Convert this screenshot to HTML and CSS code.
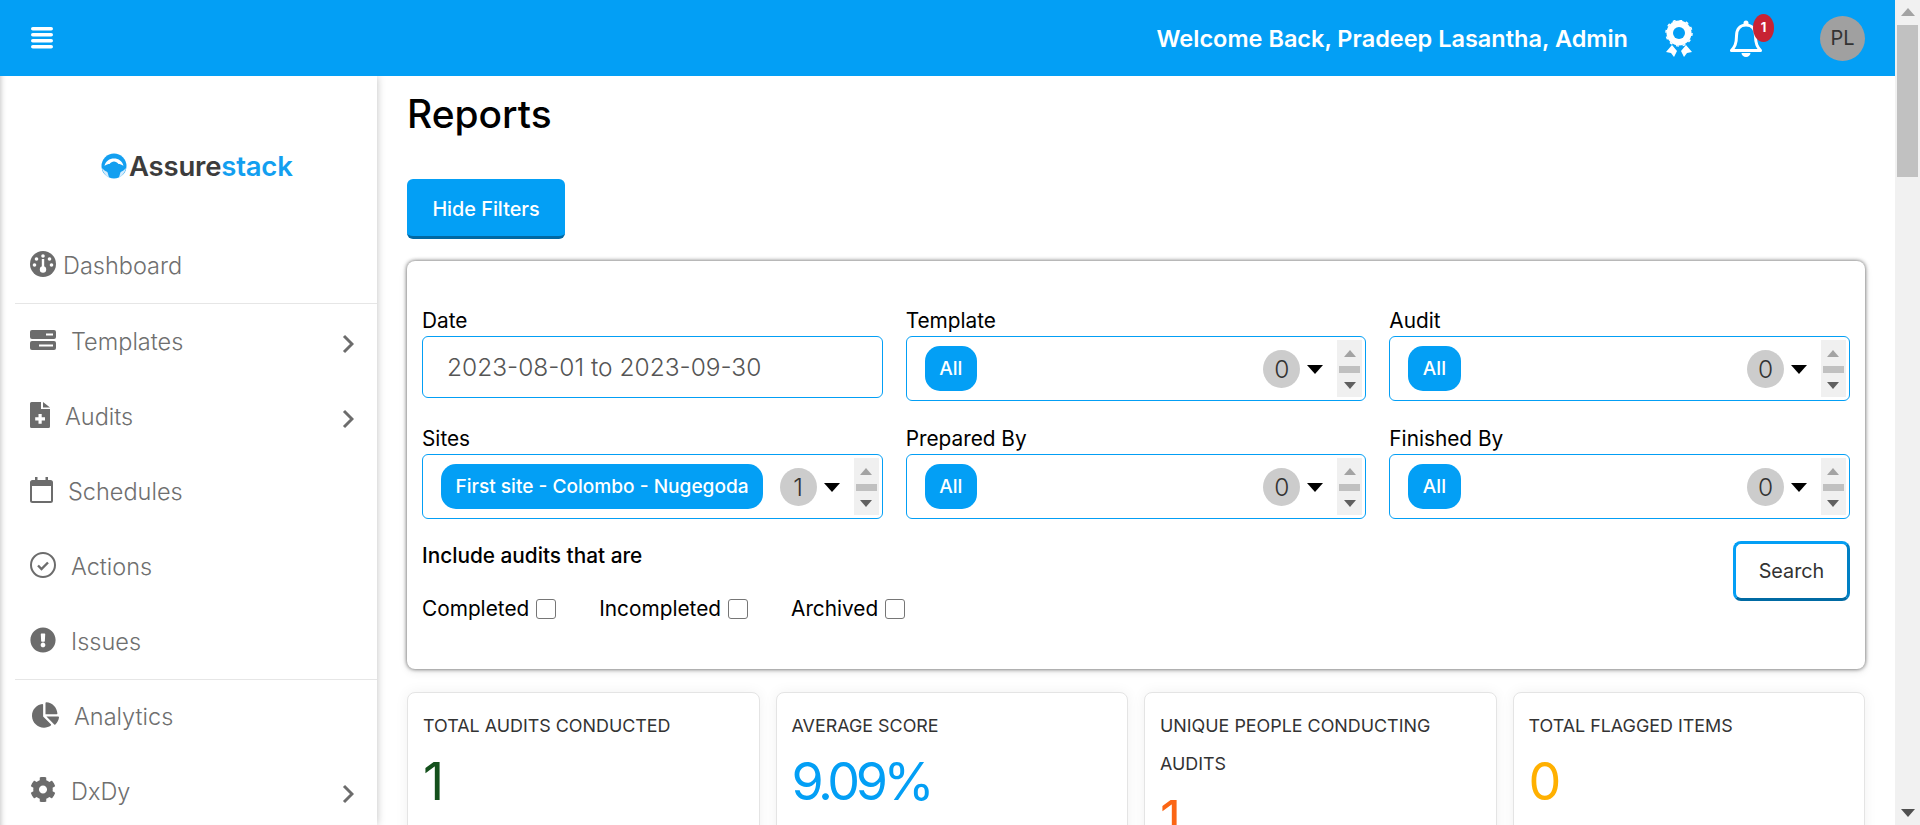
FILE: index.html
```html
<!DOCTYPE html>
<html lang="en">
<head>
    <meta charset="UTF-8">
    <meta name="viewport" content="width=device-width, initial-scale=1.0">
    <title>Reports</title>
    <link rel="stylesheet" href="styles.css">
</head>
<body>
    <div class="page">
        <header class="topbar">
            <svg class="menu-icon" width="22" height="22" viewBox="0 0 22 22"><rect y="0" width="22" height="3.6" rx="1.8"/><rect y="6" width="22" height="3.6" rx="1.8"/><rect y="12" width="22" height="3.6" rx="1.8"/><rect y="18" width="22" height="3.6" rx="1.8"/></svg>
            <div class="welcome">Welcome Back, Pradeep Lasantha, Admin</div>
            <svg class="award-icon" width="28" height="37" viewBox="0 0 28 37">
                <path d="M1 32 L7 25 L12 31 L9 37 L6 33 Z M27 32 L21 25 L16 31 L19 37 L22 33 Z" fill="#fff"/>
                <circle cx="14" cy="13" r="12.500" fill="#fff"/>
                <circle cx="14" cy="13" r="13" fill="none" stroke="#fff" stroke-width="1.500" stroke-dasharray="3 3.800"/>
                <circle cx="14" cy="13" r="6" fill="#039ff5"/>
            </svg>
            <div class="bell">
                <svg width="32" height="37" viewBox="0 0 32 37">
                    <path d="M16 5c-6 0-9.500 4.500-9.500 11 0 8-2 11-5 14.500h29c-3-3.500-5-6.500-5-14.500C25.500 9.500 22 5 16 5z" fill="none" stroke="#fff" stroke-width="3" stroke-linejoin="round"/>
                    <circle cx="16" cy="3" r="2.500" fill="#fff"/>
                    <path d="M11.500 33h9a4.500 4 0 0 1-9 0z" fill="#fff"/>
                </svg>
                <span class="badge">1</span>
            </div>
            <div class="avatar">PL</div>
        </header>

        <div class="body-row">
            <aside class="sidebar">
                <div class="logo">
                    <svg width="26" height="26" viewBox="0 0 26 26">
                        <circle cx="13" cy="13" r="12.500" fill="#139ff0"/>
                        <path d="M3.500 13c1-5 5-7.500 9.500-7.500s8.500 2.500 9.500 7.500c-2-1.500-3.500-2-5-2-1-1.500-3-2.500-4.500-2.500s-3.500 1-4.500 2.500c-1.500 0-3 .5-5 2z" fill="#fff"/>
                        <path d="M0.800 15c1 4 4 8 7.500 10-1-2-1-4-2-6-2-1-3.500-2-5.500-4z M25.200 15c-1 4-4 8-7.500 10 1-2 1-4 2-6 2-1 3.500-2 5.500-4z" fill="#d5ecfc"/>
                    </svg>
                    <span class="logo-text">Assure<span class="logo-accent">stack</span></span>
                </div>
                <nav class="nav">
                    <a class="nav-item nav-first">
                        <svg class="nav-icon" width="26" height="26" viewBox="0 0 26 26"><circle cx="13" cy="13" r="13"/><g fill="#fff"><circle cx="13" cy="5" r="1.800"/><circle cx="6.500" cy="8" r="1.800"/><circle cx="19.500" cy="8" r="1.800"/><circle cx="4.500" cy="14" r="1.800"/><circle cx="21.500" cy="14" r="1.800"/><rect x="11.800" y="8" width="2.400" height="9"/><circle cx="13" cy="18.500" r="3.200"/></g></svg>
                        <span>Dashboard</span>
                    </a>
                    <a class="nav-item">
                        <svg class="nav-icon" width="26" height="20" viewBox="0 0 26 20"><rect width="26" height="9" rx="2"/><rect y="11" width="26" height="9" rx="2"/><rect x="16" y="3.500" width="7" height="2" fill="#fff"/><rect x="9" y="14.500" width="14" height="2" fill="#fff"/></svg>
                        <span>Templates</span>
                        <svg class="chevron" width="12" height="20" viewBox="0 0 12 20"><path d="M2 2l8 8-8 8" fill="none" stroke="#6c6c6c" stroke-width="3"/></svg>
                    </a>
                    <a class="nav-item">
                        <svg class="nav-icon" width="20" height="26" viewBox="0 0 20 26"><path d="M1.500 0H11v7h9v17.500a1.500 1.500 0 0 1-1.500 1.500h-17A1.500 1.500 0 0 1 0 24.500v-23A1.500 1.500 0 0 1 1.500 0zM13 0l7 5.500h-7z"/><path d="M8.500 12h3.200v3.300H15v3.200h-3.300v3.300H8.500v-3.300H5.200v-3.200h3.300z" fill="#fff"/></svg>
                        <span>Audits</span>
                        <svg class="chevron" width="12" height="20" viewBox="0 0 12 20"><path d="M2 2l8 8-8 8" fill="none" stroke="#6c6c6c" stroke-width="3"/></svg>
                    </a>
                    <a class="nav-item">
                        <svg class="nav-icon" width="23" height="26" viewBox="0 0 23 26"><rect x="1" y="4" width="21" height="21" rx="1.500" fill="none" stroke="#6c6c6c" stroke-width="2"/><rect x="1" y="4" width="21" height="5"/><rect x="5" y="0" width="2.500" height="5"/><rect x="15.500" y="0" width="2.500" height="5"/></svg>
                        <span>Schedules</span>
                    </a>
                    <a class="nav-item">
                        <svg class="nav-icon" width="26" height="26" viewBox="0 0 26 26"><circle cx="13" cy="13" r="12" fill="none" stroke="#6c6c6c" stroke-width="2"/><path d="M8 13.500l3.500 3.500 6.500-6.500" fill="none" stroke="#6c6c6c" stroke-width="2.400"/></svg>
                        <span>Actions</span>
                    </a>
                    <a class="nav-item">
                        <svg class="nav-icon" width="26" height="26" viewBox="0 0 512 512"><path d="M504 256c0 136.997-111.043 248-248 248S8 392.997 8 256C8 119.083 119.043 8 256 8s248 111.083 248 248zm-248 50c-25.405 0-46 20.595-46 46s20.595 46 46 46 46-20.595 46-46-20.595-46-46-46zm-43.673-165.346l7.418 136c.347 6.364 5.609 11.346 11.982 11.346h48.546c6.373 0 11.635-4.982 11.982-11.346l7.418-136c.375-6.874-5.098-12.654-11.982-12.654h-63.383c-6.884 0-12.356 5.78-11.981 12.654z"/></svg>
                        <span>Issues</span>
                    </a>
                    <a class="nav-item nav-ruled">
                        <svg class="nav-icon" width="27" height="26" viewBox="0 0 544 512"><path d="M527.79 288H290.5l158.03 158.03c6.04 6.04 15.98 6.53 22.19.68 38.7-36.46 65.32-85.61 73.13-140.86 1.34-9.46-6.51-17.85-16.06-17.85zm-15.83-64.8C503.72 103.74 408.26 8.28 288.8.04 279.68-.59 272 7.1 272 16.24V240h223.77c9.14 0 16.82-7.68 16.19-16.8zM224 288V50.71c0-9.55-8.39-17.4-17.84-16.06C86.99 51.49-4.1 155.6.14 280.37 4.5 408.51 114.83 513.59 243.03 511.98c50.4-.63 96.97-16.87 135.26-44.03 7.9-5.6 8.42-17.23 1.57-24.08L224 288z"/></svg>
                        <span>Analytics</span>
                    </a>
                    <a class="nav-item">
                        <svg class="nav-icon" width="26" height="27" viewBox="0 0 512 512"><path d="M487.4 315.7l-42.6-24.6c4.3-23.2 4.3-47 0-70.2l42.6-24.6c4.9-2.8 7.1-8.6 5.5-14-11.1-35.6-30-67.8-54.7-94.6-3.8-4.1-10-5.1-14.8-2.3L380.8 110c-17.9-15.4-38.5-27.3-60.8-35.1V25.8c0-5.6-3.9-10.5-9.4-11.7-36.7-8.2-74.3-7.8-109.2 0-5.5 1.2-9.4 6.1-9.4 11.7V75c-22.2 7.9-42.8 19.8-60.8 35.1L88.7 85.5c-4.9-2.8-11-1.9-14.8 2.3-24.7 26.7-43.6 58.9-54.7 94.6-1.7 5.4.6 11.2 5.5 14L67.3 221c-4.3 23.2-4.3 47 0 70.2l-42.6 24.6c-4.9 2.8-7.1 8.6-5.5 14 11.1 35.6 30 67.8 54.7 94.6 3.8 4.1 10 5.1 14.8 2.3l42.6-24.6c17.9 15.4 38.5 27.3 60.8 35.1v49.2c0 5.6 3.9 10.5 9.4 11.7 36.7 8.2 74.3 7.8 109.2 0 5.5-1.2 9.4-6.1 9.4-11.7v-49.2c22.2-7.9 42.8-19.8 60.8-35.1l42.6 24.6c4.9 2.8 11 1.9 14.8-2.3 24.7-26.7 43.6-58.9 54.7-94.6 1.5-5.5-.7-11.3-5.6-14.1zM256 336c-44.1 0-80-35.9-80-80s35.9-80 80-80 80 35.9 80 80-35.9 80-80 80z"/></svg>
                        <span>DxDy</span>
                        <svg class="chevron" width="12" height="20" viewBox="0 0 12 20"><path d="M2 2l8 8-8 8" fill="none" stroke="#6c6c6c" stroke-width="3"/></svg>
                    </a>
                </nav>
            </aside>

            <main class="content">
                <h1 class="title">Reports</h1>
                <button class="btn-filters">Hide Filters</button>

                <section class="filter-card">
                    <div class="filter-grid">
                        <div class="field">
                            <label>Date</label>
                            <div class="date-input">2023-08-01 to 2023-09-30</div>
                        </div>
                        <div class="field">
                            <label>Template</label>
                            <div class="select-box">
                                <span class="chip">All</span>
                                <span class="count">0</span><span class="caret"></span>
                                <span class="mini-scroll"><i class="arrow-up"></i><i class="mini-thumb"></i><i class="arrow-down"></i></span>
                            </div>
                        </div>
                        <div class="field">
                            <label>Audit</label>
                            <div class="select-box">
                                <span class="chip">All</span>
                                <span class="count">0</span><span class="caret"></span>
                                <span class="mini-scroll"><i class="arrow-up"></i><i class="mini-thumb"></i><i class="arrow-down"></i></span>
                            </div>
                        </div>
                        <div class="field">
                            <label>Sites</label>
                            <div class="select-box">
                                <span class="chip">First site - Colombo - Nugegoda</span>
                                <span class="count">1</span><span class="caret"></span>
                                <span class="mini-scroll"><i class="arrow-up"></i><i class="mini-thumb"></i><i class="arrow-down"></i></span>
                            </div>
                        </div>
                        <div class="field">
                            <label>Prepared By</label>
                            <div class="select-box">
                                <span class="chip">All</span>
                                <span class="count">0</span><span class="caret"></span>
                                <span class="mini-scroll"><i class="arrow-up"></i><i class="mini-thumb"></i><i class="arrow-down"></i></span>
                            </div>
                        </div>
                        <div class="field">
                            <label>Finished By</label>
                            <div class="select-box">
                                <span class="chip">All</span>
                                <span class="count">0</span><span class="caret"></span>
                                <span class="mini-scroll"><i class="arrow-up"></i><i class="mini-thumb"></i><i class="arrow-down"></i></span>
                            </div>
                        </div>
                    </div>

                    <div class="filter-foot">
                        <div>
                            <div class="include-title">Include audits that are</div>
                            <div class="checks">
                                <label class="check">Completed <input type="checkbox"></label>
                                <label class="check">Incompleted <input type="checkbox"></label>
                                <label class="check">Archived <input type="checkbox"></label>
                            </div>
                        </div>
                        <button class="btn-search">Search</button>
                    </div>
                </section>

                <section class="stats">
                    <div class="stat">
                        <div class="stat-label">Total audits conducted</div>
                        <div class="stat-value green">1</div>
                    </div>
                    <div class="stat">
                        <div class="stat-label">Average score</div>
                        <div class="stat-value blue">9.09%</div>
                    </div>
                    <div class="stat">
                        <div class="stat-label">Unique people conducting audits</div>
                        <div class="stat-value orange">1</div>
                    </div>
                    <div class="stat">
                        <div class="stat-label">Total flagged items</div>
                        <div class="stat-value yellow">0</div>
                    </div>
                </section>
            </main>
        </div>
    </div>

    <div class="scrollbar">
        <i class="sb-up"></i>
        <i class="sb-thumb"></i>
        <i class="sb-down"></i>
    </div>
</body>
</html>
```

FILE: styles.css
```css
* {
    box-sizing: border-box;
}

html, body {
    height: 100%;
}

body {
    margin: 0;
    display: flex;
    overflow: hidden;
    background: #fff;
    font-family: Inter, "Liberation Sans", sans-serif;
    color: #000;
}

.page {
    flex: 1;
    min-width: 0;
    height: 825px;
    display: flex;
    flex-direction: column;
}

/* top bar */
.topbar {
    height: 76px;
    flex: none;
    display: flex;
    align-items: center;
    background: #039ff5;
    color: #fff;
    position: relative;
    z-index: 2;
}

.menu-icon {
    margin-left: 31px;
    fill: #fff;
}

.welcome {
    margin-left: auto;
    font-size: 23.500px;
    font-weight: 600;
}

.award-icon {
    margin-left: 37px;
}

.bell {
    position: relative;
    margin-left: 37px;
    width: 32px;
    height: 37px;
}

.badge {
    position: absolute;
    top: -6px;
    left: 23px;
    width: 21px;
    height: 28px;
    border-radius: 50%;
    background: #c82333;
    font-size: 13px;
    font-weight: 700;
    line-height: 26px;
    text-align: center;
}

.avatar {
    width: 45px;
    height: 45px;
    margin-left: 58px;
    margin-right: 30px;
    border-radius: 50%;
    background: #a0a0a0;
    color: #333;
    font-size: 20px;
    line-height: 45px;
    text-align: center;
}

.body-row {
    flex: 1;
    min-height: 0;
    display: flex;
}

/* sidebar */
.sidebar {
    width: 377px;
    flex: none;
    background: #fff;
    box-shadow: 0 0 8px rgba(0, 0, 0, 0.25), inset 6px 0 6px -6px rgba(0, 0, 0, 0.3);
}

.logo {
    height: 153px;
    padding: 26px 0 0 101px;
    display: flex;
    align-items: center;
    gap: 2px;
}

.logo-text {
    font-size: 27.500px;
    font-weight: 600;
    letter-spacing: -0.2px;
    color: #3c3c3c;
}

.logo-accent {
    color: #139ff0;
}

.nav {
    margin-left: 15px;
}

.nav-item {
    height: 75px;
    padding-left: 15px;
    padding-right: 23px;
    display: flex;
    align-items: center;
    gap: 15px;
    font-size: 23.500px;
    font-weight: 300;
    color: #6f6f6f;
}

.nav-first {
    height: 74.500px;
    gap: 7px;
    border-bottom: 1px solid #e6e6e6;
}

.nav-ruled {
    border-top: 1px solid #e6e6e6;
    padding-left: 17px;
}

.nav-icon {
    flex: none;
    margin-top: -3px;
    fill: #6c6c6c;
}

.chevron {
    margin-left: auto;
    margin-top: 6px;
}

/* main */
.content {
    flex: 1;
    min-width: 0;
    padding: 15px 30px 0;
    overflow: hidden;
}

.title {
    margin: 0 0 42px;
    font-size: 38.900px;
    font-weight: 500;
    line-height: 46px;
}

.btn-filters {
    display: block;
    width: 158px;
    height: 60px;
    padding: 2px 0 0;
    border: 0;
    border-bottom: 3px solid #0068a3;
    border-radius: 6px;
    background: #039ff5;
    color: #fff;
    font-family: inherit;
    font-size: 19.800px;
    font-weight: 500;
}

.filter-card {
    margin-top: 22px;
    padding: 48px 15px;
    border-radius: 8px;
    background: #fff;
    box-shadow: 0 0 4px rgba(0, 0, 0, 0.65), 0 3px 10px rgba(0, 0, 0, 0.08);
}

.filter-grid {
    display: grid;
    grid-template-columns: repeat(3, 1fr);
    gap: 26px 23px;
}

.field label {
    display: block;
    margin-bottom: 3px;
    font-size: 20.800px;
    font-weight: 400;
    line-height: 24px;
}

.date-input {
    height: 62px;
    padding-left: 24px;
    border: 1px solid #039ff5;
    border-radius: 6px;
    color: #555;
    font-size: 24.500px;
    font-weight: 300;
    line-height: 60px;
}

.select-box {
    height: 65px;
    padding: 0 3px 0 18px;
    border: 1px solid #039ff5;
    border-radius: 6px;
    display: flex;
    align-items: center;
}

.chip {
    height: 45px;
    padding: 0 14.500px;
    border-radius: 15px;
    background: #039ff5;
    color: #fff;
    font-size: 19.100px;
    font-weight: 500;
    line-height: 44px;
    white-space: nowrap;
}

.count {
    width: 37px;
    height: 38px;
    margin-left: auto;
    border-radius: 50%;
    background: #ccc;
    color: #333;
    font-size: 24.500px;
    font-weight: 300;
    line-height: 38px;
    text-align: center;
}

.caret {
    margin: 2px 14px 0 7px;
    border-top: 9px solid #000;
    border-left: 8px solid transparent;
    border-right: 8px solid transparent;
}

.mini-scroll {
    width: 25px;
    height: 57px;
    background: #f0f0f0;
    display: flex;
    flex-direction: column;
    align-items: center;
    justify-content: space-between;
    padding: 10px 0 8px;
}

.arrow-up {
    border-bottom: 7px solid #a3a3a3;
    border-left: 6px solid transparent;
    border-right: 6px solid transparent;
}

.arrow-down {
    border-top: 7px solid #606060;
    border-left: 6px solid transparent;
    border-right: 6px solid transparent;
}

.mini-thumb {
    width: 21px;
    height: 7px;
    background: #c0c0c0;
}

.filter-foot {
    margin-top: 22px;
    display: flex;
    justify-content: space-between;
    align-items: flex-start;
}

.include-title {
    margin-top: 3px;
    font-size: 20.800px;
    font-weight: 500;
    line-height: 24px;
}

.checks {
    margin-top: 29px;
    display: flex;
    gap: 43px;
}

.check {
    display: flex;
    align-items: center;
    gap: 7px;
    font-size: 20.800px;
    line-height: 24px;
}

.check input {
    appearance: none;
    width: 20px;
    height: 20px;
    margin: 0;
    border: 1.500px solid #767676;
    border-radius: 3px;
    background: #fff;
}

.btn-search {
    width: 117px;
    height: 60px;
    padding: 0;
    border: 3px solid #039ff5;
    border-bottom-color: #006aa3;
    border-right-color: #0080c4;
    border-radius: 8px;
    background: #fff;
    color: #333;
    font-family: inherit;
    font-size: 19.800px;
}

/* stat cards */
.stats {
    margin-top: 23px;
    display: grid;
    grid-template-columns: repeat(4, 1fr);
    gap: 16px;
}

.stat {
    height: 240px;
    padding: 14px 15px;
    border: 1px solid #e4e4e4;
    border-radius: 8px;
    background: #fff;
    box-shadow: 0 0 14px rgba(0, 0, 0, 0.06);
}

.stat-label {
    font-size: 17.900px;
    line-height: 38px;
    color: #333;
    text-transform: uppercase;
}

.stat-value {
    font-size: 52px;
    line-height: 74px;
    letter-spacing: -4.400px;
}

.green { color: #14501c; }
.blue { color: #039ff5; }
.orange { color: #fb6514; }
.yellow { color: #ffb000; }

/* window scrollbar */
.scrollbar {
    width: 25px;
    height: 825px;
    flex: none;
    padding-top: 8px;
    background: #f1f1f1;
    display: flex;
    flex-direction: column;
    align-items: center;
}

.sb-up {
    border-bottom: 8px solid #a3a3a3;
    border-left: 7px solid transparent;
    border-right: 7px solid transparent;
}

.sb-thumb {
    width: 21px;
    height: 152px;
    margin-top: 9px;
    background: #c1c1c1;
}

.sb-down {
    margin-top: auto;
    margin-bottom: 8px;
    border-top: 8px solid #505050;
    border-left: 7px solid transparent;
    border-right: 7px solid transparent;
}
```
